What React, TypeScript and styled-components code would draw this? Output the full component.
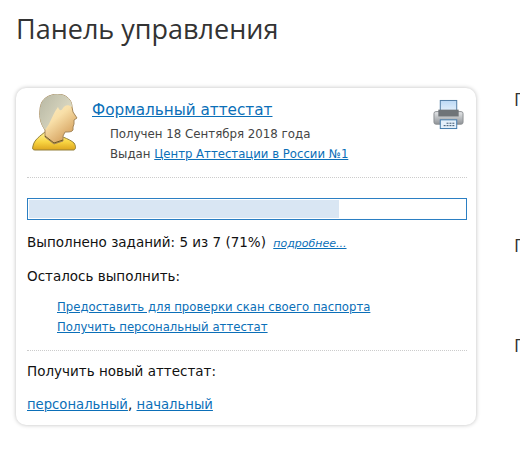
import React from "react";
import styled, { createGlobalStyle } from "styled-components";

const GlobalStyle = createGlobalStyle`
  html, body {
    margin: 0;
    padding: 0;
    background: #fff;
    overflow: hidden;
  }
  body {
    font-family: "DejaVu Sans", Verdana, sans-serif;
    color: #111;
  }
`;

const Page = styled.div`
  width: 520px;
  height: 449px;
  overflow: hidden;
  padding: 12px 0 0 16px;
  box-sizing: border-box;
`;

const Title = styled.h1`
  margin: 0 0 42px;
  font-family: "Open Sans", sans-serif;
  font-size: 27px;
  line-height: 34px;
  font-weight: 400;
  color: #333;
`;

const Columns = styled.div`
  display: flex;
  align-items: flex-start;
  gap: 38px;
`;

const Card = styled.section`
  flex: 0 0 460px;
  height: 337px;
  box-sizing: border-box;
  padding: 5px 9px 0 11px;
  background: #fff;
  border-radius: 10px;
  box-shadow: 0 0 4px rgba(0, 0, 0, 0.26);
`;

const Head = styled.div`
  display: flex;
  height: 84px;
  border-bottom: 1px dotted #ccc;
`;

const Avatar = styled.svg`
  flex: none;
  width: 46px;
  height: 57px;
  margin: 1px 0 0 5px;
`;

const HeadText = styled.div`
  flex: 1;
  padding: 7px 0 0 14px;
`;

const Name = styled.a`
  font-size: 15.25px;
  line-height: 19px;
  color: #0b6fb8;
  text-decoration: underline;
`;

const Meta = styled.div<{ $top: number }>`
  margin: ${(p) => p.$top}px 0 0 18px;
  font-size: 11.8px;
  line-height: 16px;
  color: #444;
`;

const Link = styled.a<{ $size?: number }>`
  font-size: ${(p) => p.$size ?? 11.7}px;
  color: #0b6fb8;
  text-decoration: underline;
`;

const Printer = styled.svg`
  flex: none;
  width: 31px;
  height: 31px;
  margin: 6px 3px 0 0;
`;

const Progress = styled.div`
  height: 22px;
  margin-top: 20px;
  box-sizing: border-box;
  border: 1px solid #2b7fc3;
  padding: 1px;
`;

const ProgressFill = styled.div`
  height: 100%;
  background: #d9e6f3;
`;

const Line = styled.p<{ $top: number }>`
  margin: ${(p) => p.$top}px 0 0;
  font-size: 13.5px;
  line-height: 18px;
  color: #111;
`;

const More = styled.a`
  margin-left: 3px;
  font-size: 11px;
  font-style: italic;
  color: #0b6fb8;
  text-decoration: underline;
`;

const Todo = styled.ul`
  margin: 12px 0 0;
  padding: 0 0 0 30px;
  list-style: none;
  font-size: 12px;
  line-height: 20px;
`;

const Divider = styled.hr`
  margin: 13px 0 0;
  border: 0;
  border-top: 1px dotted #ccc;
`;

const Side = styled.aside`
  flex: none;
  display: flex;
  flex-direction: column;
  font-family: "Open Sans", sans-serif;
  font-size: 18px;
  line-height: 22px;
  color: #333;
  white-space: nowrap;
`;

const SideItem = styled.div<{ $top: number }>`
  margin-top: ${(p) => p.$top}px;
`;

const UserIcon = () => (
  <Avatar viewBox="0 0 46 57">
    <defs>
      <linearGradient id="skin" x1="0" y1="0" x2="0.6" y2="1">
        <stop offset="0" stopColor="#fdf3d2" />
        <stop offset="0.55" stopColor="#f8dfa8" />
        <stop offset="1" stopColor="#d49f5c" />
      </linearGradient>
      <linearGradient id="hair" x1="0" y1="0" x2="1" y2="0.7">
        <stop offset="0" stopColor="#b7b7a3" />
        <stop offset="1" stopColor="#e2dfc8" />
      </linearGradient>
      <linearGradient id="shirt" x1="0" y1="0" x2="0" y2="1">
        <stop offset="0" stopColor="#fff39a" />
        <stop offset="0.55" stopColor="#f8d542" />
        <stop offset="1" stopColor="#dda51e" />
      </linearGradient>
    </defs>
    <path
      d="M13 38C8 42 2 46 1 52c-1 3 0 4 2 4h39c2-1 2-4 0-7-2-2-6-4-11-6l-6 5z"
      fill="url(#shirt)"
      stroke="#94803a"
      strokeWidth="1"
    />
    <path
      d="M10 8C14 1 24-1 31 1c6 2 9 7 9 12l1 5 4 6-3 2v4l-1 3v3c-1 2-4 2-8 2l-2 4v5l-9 3-9-7v-7C9 30 7 24 8 16c0-3 1-6 2-8z"
      fill="url(#skin)"
      stroke="#a5875a"
      strokeWidth="1"
    />
    <path
      d="M10 8C14 1 24-1 31 1c6 2 9 7 9 12-4-3-7-2-9 1-2 4-4 2-5-1-4 5-6 11-9 17l-4 6C9 30 7 24 8 16c0-3 1-6 2-8z"
      fill="url(#hair)"
    />
    <path d="M13 42l9 7 9-3" fill="none" stroke="#6e5a20" strokeWidth="1" />
  </Avatar>
);

const PrintIcon = () => (
  <Printer viewBox="0 0 32 32">
    <defs>
      <linearGradient id="sheet" x1="0" y1="0" x2="0" y2="1">
        <stop offset="0" stopColor="#bcd9f5" />
        <stop offset="1" stopColor="#eef6fd" />
      </linearGradient>
      <linearGradient id="body" x1="0" y1="0" x2="0" y2="1">
        <stop offset="0" stopColor="#e6e8ea" />
        <stop offset="1" stopColor="#8f9397" />
      </linearGradient>
    </defs>
    <rect x="7.5" y="1.5" width="17" height="14" fill="url(#sheet)" stroke="#4f7ba3" />
    <rect x="1" y="13" width="30" height="13" rx="2" fill="url(#body)" stroke="#8b8f93" />
    <rect x="5.5" y="11" width="21" height="7" fill="#6f7478" />
    <rect x="7.5" y="21.5" width="17" height="9" fill="#e4f0fb" stroke="#3f79ab" />
    <path d="M14 25h8M11 27.5h11" stroke="#34506a" strokeWidth="1" strokeDasharray="2 1" />
  </Printer>
);

export default function App() {
  return (
    <Page>
      <GlobalStyle />
      <Title>Панель управления</Title>
      <Columns>
        <Card>
          <Head>
            <UserIcon />
            <HeadText>
              <Name href="#">Формальный аттестат</Name>
              <Meta $top={6}>Получен 18 Сентября 2018 года</Meta>
              <Meta $top={4}>
                Выдан <Link href="#">Центр Аттестации в России №1</Link>
              </Meta>
            </HeadText>
            <PrintIcon />
          </Head>
          <Progress>
            <ProgressFill style={{ width: "71%" }} />
          </Progress>
          <Line $top={13}>
            Выполнено заданий: 5 из 7 (71%) <More href="#">подробнее...</More>
          </Line>
          <Line $top={14}>Осталось выполнить:</Line>
          <Todo>
            <li>
              <Link href="#">Предоставить для проверки скан своего паспорта</Link>
            </li>
            <li>
              <Link href="#">Получить персональный аттестат</Link>
            </li>
          </Todo>
          <Divider />
          <Line $top={11}>Получить новый аттестат:</Line>
          <Line $top={15}>
            <Link $size={13.2} href="#">персональный</Link>, <Link $size={13.2} href="#">начальный</Link>
          </Line>
        </Card>
        <Side>
          <SideItem $top={0}>Профиль</SideItem>
          <SideItem $top={124}>Платежи</SideItem>
          <SideItem $top={78}>Помощь</SideItem>
        </Side>
      </Columns>
    </Page>
  );
}
